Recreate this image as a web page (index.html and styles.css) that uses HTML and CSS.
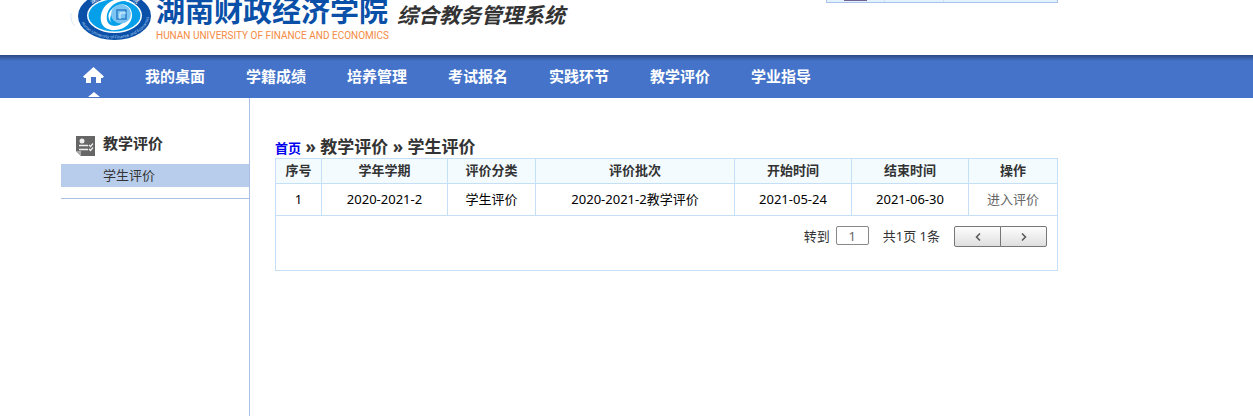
FILE: index.html
```
<!DOCTYPE html>
<html lang="zh-CN">

<head>
    <meta charset="UTF-8">
    <title>综合教务管理系统</title>
    <link rel="stylesheet" href="styles.css">
</head>

<body>
    <header class="header">
        <div class="logo">
            <svg class="logo-mark" viewBox="0 0 84 50" width="84" height="50">
                <defs>
                    <path id="ring-top" d="M15.500 26 A29 19 0 0 1 73.500 26" />
                    <path id="ring-bottom" d="M10 26 A34.500 22.500 0 0 0 79 26" />
                </defs>
                <path d="M1 23 Q0 32 5 36" fill="none" stroke="#d9e8f6" stroke-width="1" />
                <ellipse cx="44.5" cy="26" rx="36.5" ry="24" fill="#0a50a8" />
                <ellipse cx="44.5" cy="25.500" rx="27.500" ry="17.500" fill="#fff" />
                <ellipse cx="44.5" cy="25.500" rx="26" ry="16" fill="#06a0ea" />
                <path d="M65 14 C54 4 34 9 31 25 C29 36 37 41 46 40 C57 39 65 30 61 20 C59 15 52 13 46 16 C38 20 36 29 42 33 C38 30 41 22 47 19 C55 15 60 22 56 29 C52 37 39 39 37 30 C35 20 44 11 55 11 Z" fill="#fff" />
                <ellipse cx="51" cy="24" rx="10" ry="9.500" fill="#7cc5f2" />
                <path d="M47 20 H56 V29 H47 Z" fill="none" stroke="#2b7fc9" stroke-width="1.5" />
                <path d="M50 23 H56 M50 23 V29" stroke="#e9f6ff" stroke-width="1" fill="none" />
                <text class="ring-cn"><textPath href="#ring-top" startOffset="14">湖南财政经济学院</textPath></text>
                <text class="ring-en"><textPath href="#ring-bottom" startOffset="7">Hunan University of Finance and Economics</textPath></text>
            </svg>
            <div class="logo-school">
                <div class="school-cn">湖南财政经济学院</div>
                <div class="school-en">HUNAN UNIVERSITY OF FINANCE AND ECONOMICS</div>
            </div>
            <div class="logo-system">综合教务管理系统</div>
        </div>
        <div class="userbar">
            <span class="avatar"></span>
            <span class="split"></span>
            <span class="split"></span>
        </div>
    </header>

    <nav class="nav">
        <a class="home" href="#" aria-label="首页">
            <svg viewBox="0 0 21 16" width="21" height="16">
                <path d="M10.500 0 L21 9.500 L19.500 11 H18 V16 H13 V10 H8 V16 H3 V11 H1.500 L0 9.500 Z" fill="#fff" />
            </svg>
        </a>
        <a href="#">我的桌面</a>
        <a href="#">学籍成绩</a>
        <a href="#">培养管理</a>
        <a href="#">考试报名</a>
        <a href="#">实践环节</a>
        <a href="#">教学评价</a>
        <a href="#">学业指导</a>
    </nav>

    <div class="container">
        <aside class="sidebar">
            <h3>
                <svg viewBox="0 0 19 20" width="19" height="20">
                    <path d="M0 0 H19 V20 H5 L0 15 Z" fill="#666" />
                    <path d="M0 15 L5 15 L5 20 Z" fill="#aaa" />
                    <circle cx="6" cy="5" r="2.500" fill="#eee" />
                    <path d="M3 9.500 H12 M3 13.500 H12 M13 9 L14.500 10.500 L17 7.500 M13 13 L14.500 14.500 L17 11.500" fill="none" stroke="#eee" stroke-width="1.300" />
                </svg>
                教学评价
            </h3>
            <ul>
                <li><a href="#">学生评价</a></li>
            </ul>
        </aside>

        <main class="content">
            <div class="crumb">
                <a href="#">首页</a> » 教学评价 » 学生评价
            </div>
            <table class="list">
                <colgroup>
                    <col class="c-no">
                    <col class="c-term">
                    <col class="c-type">
                    <col class="c-batch">
                    <col class="c-date">
                    <col class="c-date">
                    <col class="c-op">
                </colgroup>
                <thead>
                    <tr>
                        <th>序号</th>
                        <th>学年学期</th>
                        <th>评价分类</th>
                        <th>评价批次</th>
                        <th>开始时间</th>
                        <th>结束时间</th>
                        <th>操作</th>
                    </tr>
                </thead>
                <tbody>
                    <tr>
                        <td>1</td>
                        <td>2020-2021-2</td>
                        <td>学生评价</td>
                        <td>2020-2021-2教学评价</td>
                        <td>2021-05-24</td>
                        <td>2021-06-30</td>
                        <td><a href="#">进入评价</a></td>
                    </tr>
                </tbody>
                <tfoot>
                    <tr>
                        <td colspan="7">
                            <div class="pager">
                                <label for="page">转到</label>
                                <input type="text" id="page" value="1">
                                <span class="total">共1页 1条</span>
                                <div class="btns">
                                    <button type="button" aria-label="上一页">
                                        <svg viewBox="0 0 6 8" width="6" height="8"><path d="M5 0.500 L1.500 4 L5 7.500" /></svg>
                                    </button>
                                    <button type="button" aria-label="下一页">
                                        <svg viewBox="0 0 6 8" width="6" height="8"><path d="M1 0.500 L4.500 4 L1 7.500" /></svg>
                                    </button>
                                </div>
                            </div>
                        </td>
                    </tr>
                </tfoot>
            </table>
        </main>
    </div>
</body>

</html>
```

FILE: styles.css
```
* {
  box-sizing: border-box;
}

body {
  margin: 0;
  min-height: 100vh;
  display: flex;
  flex-direction: column;
  background: #fff;
  color: #333;
  font: normal 13px/20px "Noto Sans", "Noto Sans CJK SC", sans-serif;
}

a {
  color: inherit;
  text-decoration: none;
}

/* header */
.header {
  height: 55px;
  padding: 0 195px 0 70px;
  display: flex;
  justify-content: space-between;
  overflow: hidden;
}
.logo {
  display: flex;
  align-items: flex-end;
  align-self: flex-end;
  padding-bottom: 13px;
  white-space: nowrap;
}
.logo-mark {
  display: block;
  margin-bottom: 2px;
}
.ring-cn {
  fill: #fff;
  font-size: 6px;
}
.ring-en {
  fill: #b9d6f3;
  font-size: 4px;
}
.logo-school {
  margin: 0 8px 0 2px;
}
.school-cn {
  margin-bottom: 1px;
  color: #0a50a8;
  font-size: 29px;
  font-weight: bold;
  line-height: 36px;
}
.school-en {
  color: #f58a42;
  font: 10px/12px Roboto, sans-serif;
}
.logo-system {
  padding-bottom: 13px;
  font-size: 21px;
  font-style: italic;
  font-weight: bold;
  line-height: 28px;
}
.userbar {
  width: 232px;
  height: 3px;
  padding-left: 17px;
  display: flex;
  background: #e2f1fe;
  border: 1px solid #a9c3ea;
  border-top: 0;
}
.userbar .avatar {
  width: 23px;
  height: 1px;
  background: #73628f;
}
.userbar .split {
  width: 1px;
  margin-left: 17px;
  background: #cfe2f5;
}
.userbar .split + .split {
  margin-left: 58px;
}

/* main menu */
.nav {
  height: 43px;
  padding-left: 83px;
  display: flex;
  gap: 41px;
  background: linear-gradient(#2c4a82, #4473c9 6px);
  color: #fff;
  font-size: 15px;
  font-weight: bold;
  line-height: 42px;
}
.nav .home {
  position: relative;
  height: 43px;
  padding-top: 12px;
}
.nav .home svg {
  display: block;
}
.nav .home::after {
  content: "";
  position: absolute;
  left: 5px;
  bottom: 1px;
  border: 6px solid transparent;
  border-top: 0;
  border-bottom: 5px solid #fff;
}

/* body */
.container {
  flex: 1;
  margin: 0 195px 0 61px;
  display: flex;
}
.sidebar {
  flex: none;
  width: 189px;
  padding-top: 36px;
  border-right: 1px solid #a9c0e4;
}
.sidebar h3 {
  margin: 0;
  padding-left: 15px;
  height: 30px;
  display: flex;
  gap: 8px;
  font-size: 15px;
  line-height: 18px;
}
.sidebar h3 svg {
  margin-top: 2px;
}
.sidebar ul {
  margin: 0;
  padding: 0 0 11px;
  list-style: none;
  border-bottom: 1px solid #a9c0e4;
}
.sidebar li a {
  display: block;
  padding-left: 42px;
  background: #b8cdec;
  line-height: 23px;
}
.content {
  flex: 1;
  padding: 38px 0 0 25px;
}
.crumb {
  height: 22px;
  font-size: 17px;
  font-weight: bold;
  line-height: 22px;
}
.crumb a {
  color: #00e;
  font-size: 13px;
}

.list {
  width: 100%;
  table-layout: fixed;
  border-collapse: collapse;
  border: 1px solid #c4dff6;
}
.list th,
.list td {
  padding: 0 0 2px;
  border: 1px solid #c4dff6;
  text-align: center;
}
.list th {
  height: 25px;
  background: #f3fbff;
}
.list td {
  height: 32px;
  color: #000;
}
.list td a {
  color: #666;
}
.c-no { width: 46px; }
.c-term { width: 126px; }
.c-type { width: 88px; }
.c-batch { width: 199px; }
.c-date { width: 117px; }
.c-op { width: 89px; }

.list tfoot td {
  height: 55px;
  padding: 10px 10px 0 0;
  vertical-align: top;
}
.pager {
  display: flex;
  justify-content: flex-end;
  color: #333;
}
.pager input {
  width: 33px;
  height: 19px;
  margin: 0 14px 0 6px;
  padding: 0;
  border: 1px solid #888;
  border-radius: 2px;
  color: #666;
  font: inherit;
  text-align: center;
}
.pager .btns {
  margin-left: 14px;
  display: flex;
}
.pager button {
  width: 47px;
  height: 21px;
  padding: 0;
  display: flex;
  align-items: center;
  justify-content: center;
  border: 1px solid #777;
  border-radius: 2px 0 0 2px;
  background: linear-gradient(#fdfdfd, #dfdfdf);
}
.pager button + button {
  margin-left: -1px;
  border-radius: 0 2px 2px 0;
}
.pager button path {
  fill: none;
  stroke: #555;
  stroke-width: 1.5;
}
```
